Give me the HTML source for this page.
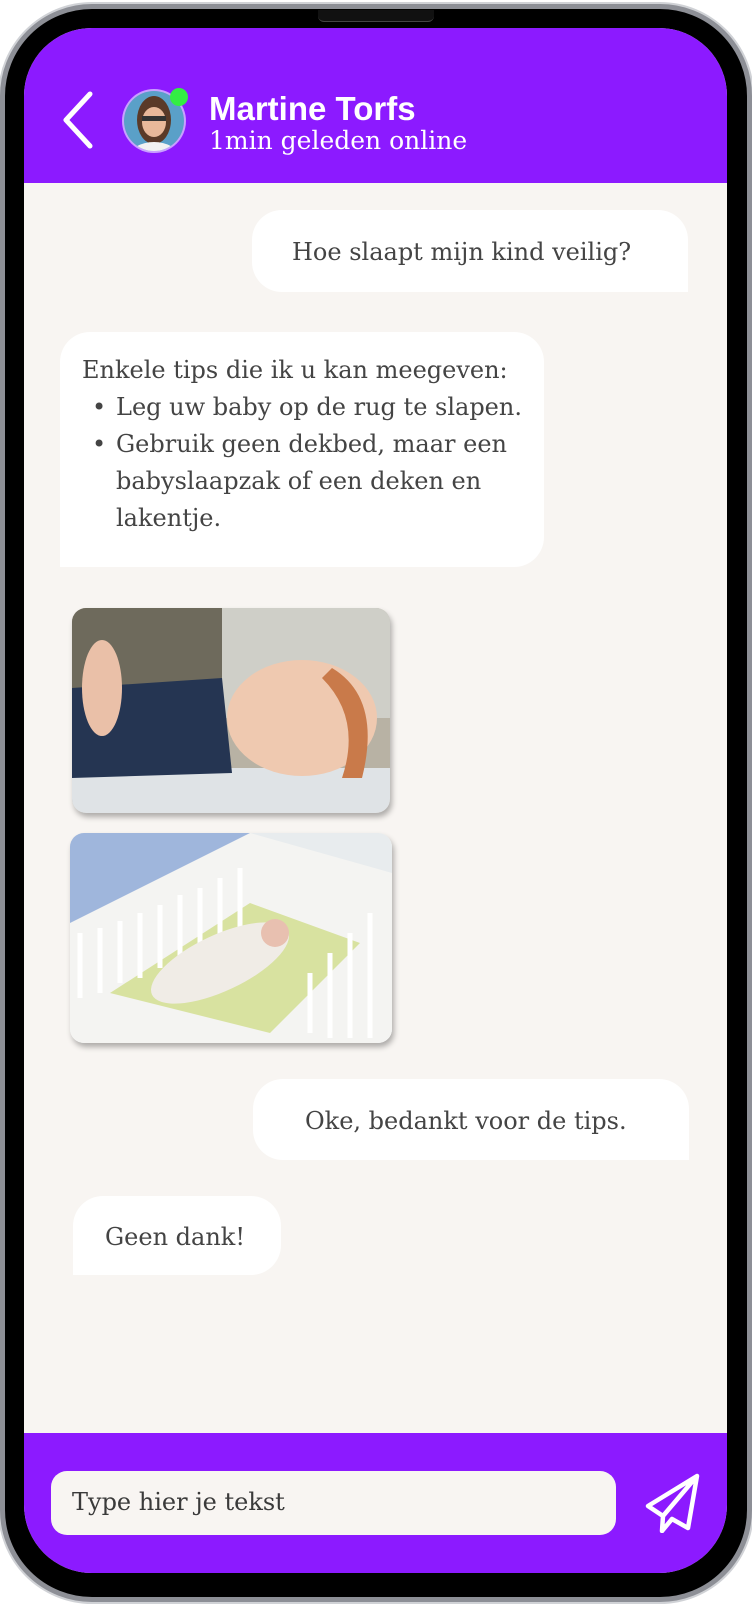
<!DOCTYPE html>
<html><head><meta charset="utf-8"><style>
*{margin:0;padding:0;box-sizing:border-box}
html,body{width:752px;height:1604px;background:#fff;overflow:hidden}
body{position:relative;font-family:"DejaVu Serif",serif}
.phone{position:absolute;left:0;top:4px;width:752px;height:1598px;border-radius:92px;background:#000;border:5px solid #8d8f96;box-shadow:0 0 0 2px #d0d2d6}
.notch{position:absolute;left:318px;top:10px;width:116px;height:12px;background:#111;border-radius:0 0 6px 6px;border-bottom:1px solid #444}
.screen{position:absolute;left:24px;top:28px;width:703px;height:1545px;border-radius:68px;overflow:hidden;background:#f8f5f2}
.hdr{position:absolute;left:0;top:0;width:703px;height:155px;background:#8c1aff}
.ftr{position:absolute;left:0;top:1405px;width:703px;height:140px;background:#8c1aff}
.bub{position:absolute;background:#fff;color:#444;font-size:24px;line-height:37px;font-weight:300}
.img{position:absolute;border-radius:14px;overflow:hidden;box-shadow:2px 4px 6px rgba(0,0,0,.3)}
</style></head><body>
<div class="phone"></div>
<div class="notch"></div>
<div class="screen">
 <div class="hdr">
  <svg style="position:absolute;left:36px;top:62px" width="36" height="60"><path d="M30 4 L6 30 L30 56" fill="none" stroke="#fff" stroke-width="5" stroke-linecap="round" stroke-linejoin="round"/></svg>
  <svg style="position:absolute;left:97px;top:58px" width="72" height="70">
   <defs><clipPath id="c"><circle cx="33" cy="35" r="30"/></clipPath></defs>
   <circle cx="33" cy="35" r="32" fill="#c9a0ff"/>
   <g clip-path="url(#c)"><rect width="72" height="70" fill="#5aa0c8"/>
   <ellipse cx="33" cy="34" rx="17" ry="24" fill="#5a3a28"/>
   <ellipse cx="33" cy="36" rx="12" ry="15" fill="#e8b89a"/>
   <rect x="21" y="30" width="24" height="5" fill="#333"/>
   <ellipse cx="33" cy="70" rx="24" ry="14" fill="#f2f2f2"/></g>
   <circle cx="58" cy="11" r="9" fill="#33ee44"/>
  </svg>
  <div style="position:absolute;left:185px;top:62px;color:#fff;font:bold 33px 'Liberation Sans',sans-serif">Martine Torfs</div>
  <div style="position:absolute;left:185px;top:98px;color:#fff;font-size:25px">1min geleden online</div>
 </div>
 <div class="bub" style="left:228px;top:182px;width:436px;height:82px;border-radius:30px 30px 0 30px;padding:24px 0 0 40px">Hoe slaapt mijn kind veilig?</div>
 <div class="bub" style="left:36px;top:304px;width:484px;height:235px;border-radius:30px 30px 30px 0;padding:20px 0 0 22px">Enkele tips die ik u kan meegeven:
  <div style="position:relative;padding-left:34px">
   <span style="position:absolute;left:10px">•</span>Leg uw baby op de rug te slapen.<br>
   <span style="position:absolute;left:10px">•</span>Gebruik geen dekbed, maar een babyslaapzak of een deken en lakentje.</div></div>
 <div class="img" style="left:48px;top:580px;width:318px;height:205px">
  <svg width="318" height="205"><rect width="318" height="205" fill="#b8b2a4"/><rect x="0" y="0" width="150" height="90" fill="#6e6a5c"/><rect x="150" y="0" width="168" height="110" fill="#cfcfc8"/>
  <rect y="160" width="318" height="45" fill="#dfe3e6"/>
  <path d="M0 80 L150 70 L160 165 L0 170Z" fill="#253552"/>
  <ellipse cx="230" cy="110" rx="75" ry="58" fill="#efc9b0"/>
  <path d="M260 60 Q310 90 290 170 L270 170 Q290 110 250 70Z" fill="#c97a4a"/>
  <ellipse cx="30" cy="80" rx="20" ry="48" fill="#eac0a8"/></svg></div>
 <div class="img" style="left:46px;top:805px;width:322px;height:210px">
  <svg width="322" height="210"><rect width="322" height="210" fill="#e8ecee"/><rect width="180" height="90" fill="#9fb6dc"/>
  <path d="M0 90 L180 0 L322 40 L322 210 L0 210Z" fill="#f4f4f2"/>
  <path d="M40 160 L180 70 L290 110 L200 200Z" fill="#d8e2a0"/>
  <g stroke="#fff" stroke-width="5">
  <line x1="10" y1="100" x2="10" y2="165"/><line x1="30" y1="95" x2="30" y2="160"/><line x1="50" y1="88" x2="50" y2="150"/><line x1="70" y1="80" x2="70" y2="145"/><line x1="90" y1="72" x2="90" y2="135"/><line x1="110" y1="62" x2="110" y2="125"/><line x1="130" y1="55" x2="130" y2="115"/><line x1="150" y1="45" x2="150" y2="105"/><line x1="170" y1="35" x2="170" y2="95"/>
  <line x1="240" y1="200" x2="240" y2="140"/><line x1="260" y1="205" x2="260" y2="120"/><line x1="280" y1="205" x2="280" y2="100"/><line x1="300" y1="205" x2="300" y2="80"/></g>
  <ellipse cx="150" cy="130" rx="75" ry="28" fill="#f0ece6" transform="rotate(-25 150 130)"/>
  <circle cx="205" cy="100" r="14" fill="#e8c0b0"/></svg></div>
 <div class="bub" style="left:229px;top:1051px;width:436px;height:81px;border-radius:30px 30px 0 30px;padding:24px 0 0 52px">Oke, bedankt voor de tips.</div>
 <div class="bub" style="left:49px;top:1168px;width:208px;height:79px;border-radius:30px 30px 30px 0;padding:23px 0 0 32px">Geen dank!</div>
 <div class="ftr">
  <div style="position:absolute;left:27px;top:38px;width:565px;height:64px;background:#f8f5f2;border-radius:16px;color:#3a3a3a;font-size:24px;padding:17px 0 0 21px">Type hier je tekst</div>
  <svg style="position:absolute;left:618px;top:38px" width="62" height="62"><path d="M55 5 L6 35 L21 45 Z M55 5 L21 45 L20 60 L30 48 L46 57 Z" fill="none" stroke="#fff" stroke-width="4.5" stroke-linejoin="round"/></svg>
 </div>
</div>
</body></html>
